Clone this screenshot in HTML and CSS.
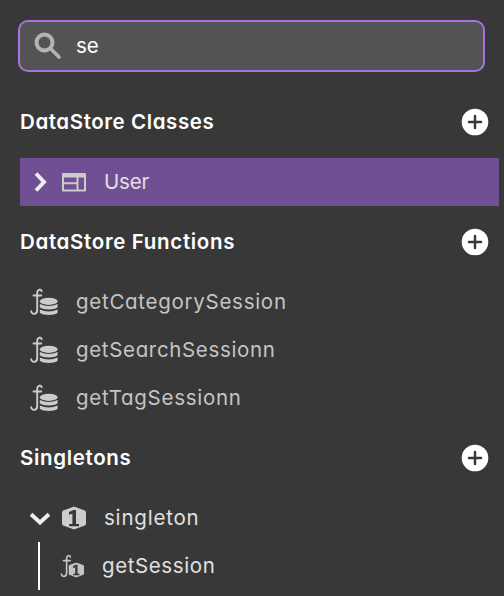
FILE: index.html
```html
<!DOCTYPE html>
<html lang="en">
<head>
<meta charset="utf-8">
<title>Explorer</title>
<link rel="stylesheet" href="styles.css">
</head>
<body>
<svg class="defs" aria-hidden="true">
  <symbol id="plus" viewBox="0 0 28 28">
    <circle cx="14" cy="14" r="13.3" fill="#fff"/>
    <path d="M14 8v12M8 14h12" stroke="#383838" stroke-width="2.500" stroke-linecap="round"/>
  </symbol>
  <symbol id="fn" viewBox="0 0 13 28">
    <path d="M11.6 3.5C11.3 1.2 7.6 1 7.2 5V22.200C7.100 27.300 1.500 27.200 1.200 23.500M3.500 7.800H11.300" fill="none" stroke="currentColor" stroke-width="1.900" stroke-linecap="round"/>
  </symbol>
  <symbol id="fn-db" viewBox="0 0 28 28">
    <use href="#fn" y="-0.300" width="13" height="28"/>
    <ellipse cx="18.700" cy="13.300" rx="8.900" ry="3.600" fill="currentColor"/>
    <path d="M9.800 15.900q8.900 4.200 17.800 0v3.300c-3.500 3-14.300 3-17.800 0zM9.800 21.500q8.900 4.200 17.800 0v3.200c-3.500 3-14.300 3-17.800 0z" fill="currentColor"/>
  </symbol>
  <symbol id="one" viewBox="0 0 24 24">
    <path d="M12 .5 22.700 4.500Q24 5 24 6.200V17.800Q24 19 22.700 19.500L12 23.500 1.300 19.500Q0 19 0 17.800V6.200Q0 5 1.300 4.500Z" fill="currentColor"/>
    <path d="M7 5.900 11.500 4H14V18H17V20.300H7.200V18H10.400V7.800L7 8.800Z" fill="#383838"/>
  </symbol>
</svg>
<main class="panel">
  <label class="search">
    <svg class="search-icon" viewBox="0 0 28 28"><circle cx="10.500" cy="10.500" r="8" fill="none" stroke="#b3b3b3" stroke-width="4"/><path d="M16.500 16.500 25 25" stroke="#b3b3b3" stroke-width="3.600" stroke-linecap="round"/></svg>
    <span class="query">se</span>
  </label>

  <section>
    <header class="heading"><h2 class="h-classes">DataStore Classes</h2><svg class="add"><use href="#plus"/></svg></header>
    <div class="row selected">
      <svg class="chevron" viewBox="0 0 20 20"><path d="M6 1.500 14 10 6 18.500" fill="none" stroke="#eee" stroke-width="3.900"/></svg>
      <svg class="type" viewBox="0 0 24 24"><path fill-rule="evenodd" fill="currentColor" d="M1 3H23Q24 3 24 4V20.500Q24 21.500 23 21.500H1Q0 21.500 0 20.500V4Q0 3 1 3ZM2 7.500V12.200H14.500V7.500ZM2 14.200V19.500H14.500V14.200ZM16.500 7.500V19.500H22V7.500Z"/></svg>
      <span class="t-user">User</span>
    </div>
  </section>

  <section>
    <header class="heading"><h2 class="h-functions">DataStore Functions</h2><svg class="add"><use href="#plus"/></svg></header>
    <div class="row function"><svg class="fn-icon"><use href="#fn-db"/></svg><span class="t-category">getCategorySession</span></div>
    <div class="row function"><svg class="fn-icon"><use href="#fn-db"/></svg><span class="t-search">getSearchSessionn</span></div>
    <div class="row function"><svg class="fn-icon"><use href="#fn-db"/></svg><span class="t-tag">getTagSessionn</span></div>
  </section>

  <section class="singletons">
    <header class="heading"><h2 class="h-singletons">Singletons</h2><svg class="add"><use href="#plus"/></svg></header>
    <div class="row">
      <svg class="chevron" viewBox="0 0 20 20"><path d="M1 6.300 10 14.500 19 6.300" fill="none" stroke="#eee" stroke-width="3.900"/></svg>
      <svg class="type"><use href="#one"/></svg>
      <span class="t-singleton">singleton</span>
    </div>
    <div class="row child">
      <svg class="child-icon" viewBox="0 0 25 25"><use href="#fn" x="0" y="0" width="12" height="24"/><use href="#one" x="8.500" y="8.200" width="15.500" height="15.500"/></svg>
      <span class="t-session">getSession</span>
    </div>
  </section>
</main>
</body>
</html>
```
FILE: styles.css
```css
* { box-sizing: border-box; }
body {
  margin: 0;
  background: #383838;
  color: #e0e0e0;
  font-family: Inter, "Open Sans", sans-serif;
  font-feature-settings: "cv11";
  font-size: 20.5px;
  line-height: 48px;
}
.defs { position: absolute; width: 0; height: 0; }
svg { display: block; flex: none; }
.panel { height: 596px; overflow: hidden; padding-top: 20px; }
.search {
  display: flex;
  align-items: center;
  width: 467px;
  height: 52px;
  margin: 0 0 20px 18px;
  padding-left: 14px;
  background: #535353;
  border: 2px solid #a873df;
  border-radius: 10px;
}
.search-icon { width: 28px; height: 28px; }
.query { margin-left: 14px; color: #fff; }
.heading {
  display: flex;
  align-items: center;
  justify-content: space-between;
  height: 60px;
  margin-bottom: 6px;
  padding: 0 15px 0 20px;
}
h2 { margin: 0; color: #fff; font-size: 20.5px; font-weight: 600; line-height: 60px; }
.add { width: 28px; height: 28px; }
.row { display: flex; align-items: center; height: 48px; }
.row span { font-weight: 400; white-space: nowrap; }
.selected { margin: 0 5px 6px 20px; padding-left: 10px; background: #704f94; }
.chevron { width: 20px; height: 20px; margin-right: 12px; }
.type { width: 24px; height: 24px; margin-right: 18px; color: #ccc; }
.function { padding-left: 30px; color: #c4c4c4; }
.fn-icon { width: 28px; height: 28px; margin-right: 18px; color: #ccc; }
.singletons { padding-top: 6px; }
.singletons .row { padding-left: 30px; }
.singletons .child { margin-left: 38px; padding-left: 20px; border-left: 2px solid #fff; }
.child-icon { width: 25px; height: 25px; margin-right: 17px; color: #c4c4c4; }

/* Tracking per label */
.h-classes { letter-spacing: 0.58px; }
.h-functions { letter-spacing: 0.66px; }
.h-singletons { letter-spacing: 0.65px; }
.t-user { letter-spacing: -0.2px; }
.t-category { letter-spacing: 0.72px; }
.t-search { letter-spacing: 0.66px; }
.t-tag { letter-spacing: 0.72px; }
.t-singleton { letter-spacing: 0.8px; }
.t-session { letter-spacing: 0.6px; }
```
